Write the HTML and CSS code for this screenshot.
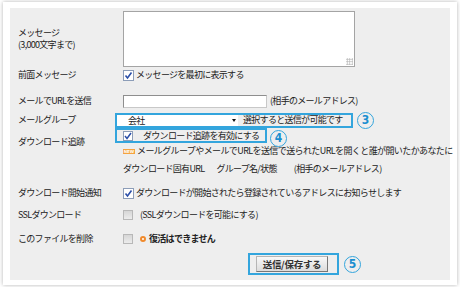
FILE: index.html
```html
<!DOCTYPE html>
<html lang="ja">
<head>
    <meta charset="UTF-8">
    <meta name="viewport" content="width=device-width, initial-scale=1.0">
    <title>送信設定</title>
    <link rel="stylesheet" href="styles.css">
</head>
<body>
    <div class="card">
        <div class="panel">

            <!-- message -->
            <div class="row row-msg">
                <div class="label two">メッセージ<br>(3,000文字まで)</div>
                <div class="field">
                    <div class="textarea"><span class="grip"></span></div>
                </div>
            </div>

            <div class="row row-top">
                <div class="label">前面メッセージ</div>
                <div class="line">
                    <span class="check on"><svg viewBox="0 0 11 11" width="11" height="11"><path d="M2.5 5.5 L4.5 8 L8.5 2.5" fill="none" stroke="#2b4fa8" stroke-width="1.6"/></svg></span>
                    <span class="after-check">メッセージを最初に表示する</span>
                </div>
            </div>

            <div class="row row-mail">
                <div class="label">メールでURLを送信</div>
                <div class="line">
                    <span class="input"></span>
                    <span class="hint">(相手のメールアドレス)</span>
                </div>
            </div>

            <!-- group select (3) -->
            <div class="row row-group">
                <div class="label">メールグループ</div>
                <div class="line">
                    <div class="mark-box group-box">
                        <div class="select">会社<span class="arrow"></span></div>
                        <span class="select-note">選択すると送信が可能です</span>
                    </div>
                </div>
            </div>

            <!-- download tracking (4) -->
            <div class="row row-track">
                <div class="label track-label">ダウンロード追跡</div>
                <div class="field">
                    <div class="mark-box track-box">
                        <span class="check on small"><svg viewBox="0 0 10 10" width="10" height="10"><path d="M2 5 L4 7.5 L8 2" fill="none" stroke="#2b4fa8" stroke-width="1.5"/></svg></span>
                        <span class="track-text">ダウンロード追跡を有効にする</span>
                    </div>
                    <div class="line note-line">
                        <span class="new">NEW</span>
                        <span>メールグループやメールでURLを送信で送られたURLを開くと誰が開いたかあなたに</span>
                    </div>
                    <div class="line cols-line">
                        <span>ダウンロード固有URL</span>
                        <span class="col">グループ名/状態</span>
                        <span class="col">(相手のメールアドレス)</span>
                    </div>
                </div>
            </div>

            <div class="row row-notify">
                <div class="label">ダウンロード開始通知</div>
                <div class="line">
                    <span class="check on"><svg viewBox="0 0 11 11" width="11" height="11"><path d="M2.5 5.5 L4.5 8 L8.5 2.5" fill="none" stroke="#2b4fa8" stroke-width="1.6"/></svg></span>
                    <span class="after-check">ダウンロードが開始されたら登録されているアドレスにお知らせします</span>
                </div>
            </div>

            <div class="row row-ssl">
                <div class="label">SSLダウンロード</div>
                <div class="line">
                    <span class="check off"></span>
                    <span class="after-off">(SSLダウンロードを可能にする)</span>
                </div>
            </div>

            <div class="row row-del">
                <div class="label">このファイルを削除</div>
                <div class="line">
                    <span class="check off"></span>
                    <span class="ring"></span>
                    <span class="warn">復活はできません</span>
                </div>
            </div>

            <!-- submit (5) -->
            <div class="row-submit">
                <div class="mark-box submit-box">
                    <button type="button" class="submit">送信/保存する</button>
                </div>
            </div>

            <!-- callout numbers -->
            <span class="num num3">3</span>
            <span class="num num4">4</span>
            <span class="num num5">5</span>
        </div>
    </div>
</body>
</html>
```

FILE: styles.css
```css
*{
    margin: 0;
    padding: 0;
    box-sizing: border-box;
}
body {
    background: #fff;
    font-family: "Noto Sans CJK JP", "Noto Sans", sans-serif;
    font-size: 9px;
    letter-spacing: -0.7px;
    color: #222;
}
.card {
    margin: 2px 3px;
    padding: 6px 7px 5px;
    background: #fff;
    box-shadow: 0 0 4px rgba(0, 0, 0, 0.3);
    overflow: hidden;
}
.panel {
    position: relative;
    height: 272px;
    padding: 3px 0 0 8px;
    background: #eeeeee;
}
.row {
    display: grid;
    grid-template-columns: 105px minmax(0, 1fr);
    align-items: center;
    line-height: 14px;
    height: 14px;
}
.line {
    display: flex;
    align-items: center;
    white-space: nowrap;
    height: 14px;
}
.label.two {
    line-height: 12px;
}

/* rows, top to bottom */
.row-msg { height: 56px; }
.row-top { margin-top: 1px; }
.row-mail { margin-top: 12px; height: 13px; }
.row-group { margin-top: 6px; }
.row-track {
    margin-top: 1px;
    height: auto;
    align-items: start;
}
.track-label { padding-top: 7px; }
.row-notify { margin-top: 10px; }
.row-ssl { margin-top: 8px; }
.row-del { margin-top: 10px; }
.row-submit {
    margin-top: 7px;
    padding-left: 230px;
}

.textarea {
    position: relative;
    width: 232px;
    height: 56px;
    background: #fff;
    border: 1px solid #a4a4a4;
}
.grip {
    position: absolute;
    right: 1px;
    bottom: 1px;
    width: 7px;
    height: 7px;
    background: radial-gradient(circle, #b8b8b8 0.8px, transparent 1px) 0 0 / 2.5px 2.5px;
}

.check {
    display: inline-block;
    flex: none;
    width: 11px;
    height: 11px;
    border: 1px solid #8c9db8;
    background: #fff;
    position: relative;
}
.check svg {
    position: absolute;
    left: -1px;
    top: -1px;
}
.check.small {
    width: 10px;
    height: 10px;
}
.check.off {
    width: 10px;
    height: 10px;
    border-color: #b8b8b8;
    background: linear-gradient(#d6d6d6, #ececec);
}
.after-check { margin-left: 2px; }
.after-off { margin-left: 7px; }

.input {
    display: inline-block;
    width: 144px;
    height: 13px;
    background: #fff;
    border: 1px solid #8e8e8e;
    border-right-color: #c8c8c8;
    border-bottom-color: #c8c8c8;
}
.hint { margin-left: 3px; }

/* blue highlight boxes */
.mark-box {
    border: 2px solid #33a5dd;
}
.group-box {
    display: flex;
    align-items: center;
    width: 238px;
    height: 15px;
    margin-left: -8px;
    white-space: nowrap;
}
.select {
    position: relative;
    flex: none;
    width: 121px;
    height: 11px;
    line-height: 11px;
    padding-left: 11px;
    background: #fff;
}
.arrow {
    position: absolute;
    right: 2px;
    top: 4px;
    border-left: 2.5px solid transparent;
    border-right: 2.5px solid transparent;
    border-top: 3px solid #111;
}
.select-note { margin-left: 5px; }

.track-box {
    display: flex;
    align-items: center;
    width: 152px;
    height: 15px;
    margin-left: -8px;
    padding-left: 6px;
    white-space: nowrap;
}
.track-text { margin-left: 10px; }

.note-line {
    margin-top: 1px;
    letter-spacing: -0.6px;
}
.new {
    display: inline-block;
    flex: none;
    width: 12px;
    height: 5px;
    margin-right: 2px;
    background: #f4a340;
    color: #fff;
    font-size: 4px;
    letter-spacing: 0;
    line-height: 5px;
    text-align: center;
    font-family: "DejaVu Sans", sans-serif;
    font-weight: bold;
    overflow: hidden;
}
.cols-line { margin-top: 4px; }
.col { margin-left: 12px; }
.col + .col { margin-left: 17px; }

.ring {
    display: inline-block;
    flex: none;
    width: 6px;
    height: 6px;
    margin-left: 7px;
    border: 2px solid #f08a2c;
    border-radius: 50%;
    background: #fff;
}
.warn {
    margin-left: 3px;
    font-weight: bold;
    color: #222;
}

.submit-box {
    display: flex;
    align-items: center;
    width: 91px;
    height: 22px;
    padding-left: 6px;
}
.submit {
    width: 72px;
    height: 16px;
    font-family: "Noto Sans CJK JP", sans-serif;
    font-size: 9.5px;
    letter-spacing: -0.3px;
    font-weight: bold;
    color: #333;
    line-height: 14px;
    background: linear-gradient(#f8f8f8, #dcdcdc);
    border: 1px solid #b5b5b5;
    border-right-color: #777;
    border-bottom-color: #777;
}

/* circled numbers over the form */
.num {
    position: absolute;
    width: 17px;
    height: 17px;
    border: 1.5px solid #33a5dd;
    border-radius: 50%;
    color: #1a8fd0;
    font-family: "DejaVu Sans", sans-serif;
    font-stretch: condensed;
    font-weight: bold;
    font-size: 12px;
    letter-spacing: 0;
    line-height: 14px;
    text-align: center;
}
.num3 { left: 347px; top: 104px; }
.num4 { left: 260px; top: 122px; }
.num5 { left: 334px; top: 248px; }
```
